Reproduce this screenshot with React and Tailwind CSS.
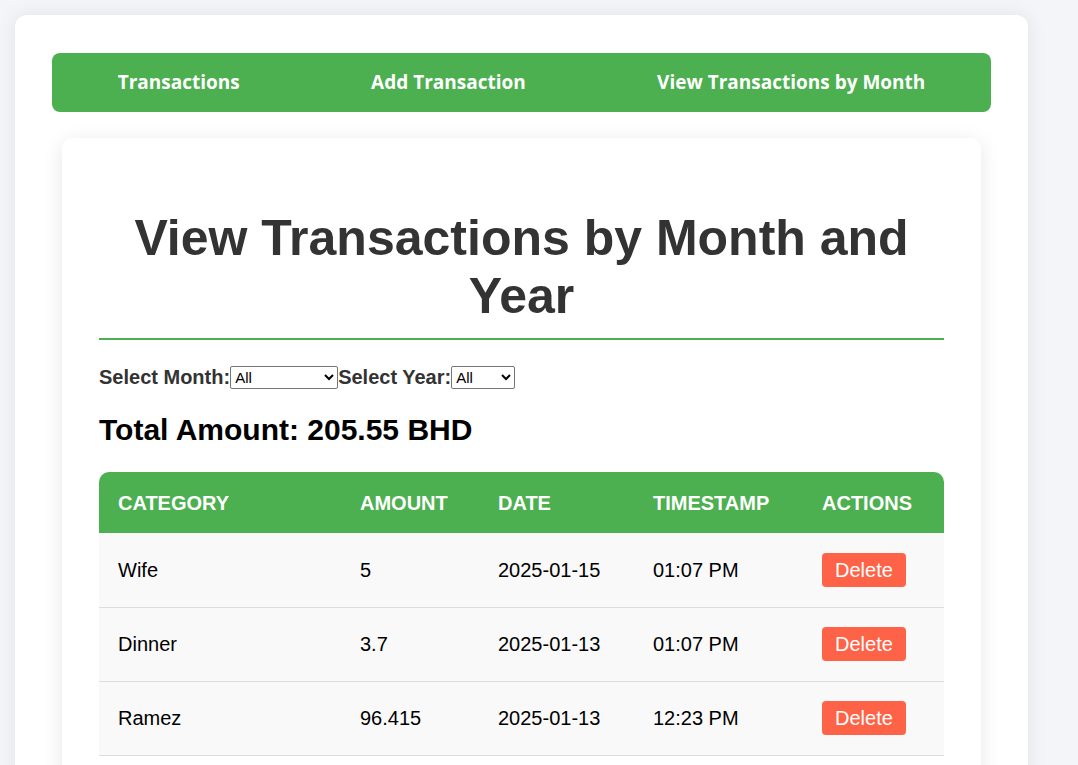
import React from "react";

const rows = [
  ["Wife", "5", "2025-01-15", "01:07 PM"],
  ["Dinner", "3.7", "2025-01-13", "01:07 PM"],
  ["Ramez", "96.415", "2025-01-13", "12:23 PM"],
];

export default function App() {
  return (
    <div className="min-h-[765px] bg-[#f4f5f9] pt-[15px] pb-10 font-['Liberation_Sans',Arial,sans-serif]">
      <div className="ml-[15px] w-[1013px] rounded-xl bg-white pt-[38px] px-[37px] pb-10 shadow-[0_0_20px_rgba(0,0,0,0.08)]">
        <nav className="flex h-[59px] items-center justify-around rounded-lg bg-[#4caf50] text-[19px] font-bold text-white font-['Open_Sans','Noto_Sans',sans-serif]">
          <span>Transactions</span>
          <span>Add Transaction</span>
          <span>View Transactions by Month</span>
        </nav>
        <div className="mx-[10px] mt-[26px] rounded-[10px] bg-white px-[37px] pt-8 pb-10 shadow-[0_4px_20px_rgba(0,0,0,0.1)]">
          <h1 className="mt-[39px] border-b-2 border-[#4caf50] pb-[13px] text-center text-[50px] font-bold leading-[58px] text-[#333]">
            View Transactions by Month and Year
          </h1>
          <div className="mt-[25px] flex h-[24px] items-center text-[20px] font-bold text-[#333]">
            <label>Select Month:</label>
            <select className="h-[23px] w-[108px] rounded-[2px] border border-[#767676] bg-white text-[15px] font-normal text-black">
              <option>All</option>
            </select>
            <label>Select Year:</label>
            <select className="h-[23px] w-[64px] rounded-[2px] border border-[#767676] bg-white text-[15px] font-normal text-black">
              <option>All</option>
            </select>
          </div>
          <h2 className="mt-[24px] text-[30px] font-bold leading-[34px] text-black">
            Total Amount: 205.55 BHD
          </h2>
          <table className="mt-[25px] w-full border-collapse text-left text-[20px]">
            <thead>
              <tr className="h-[61px] bg-[#4caf50] text-white">
                <th className="w-[242px] rounded-tl-[10px] pl-[19px] font-bold">CATEGORY</th>
                <th className="w-[138px] pl-[19px] font-bold">AMOUNT</th>
                <th className="w-[155px] pl-[19px] font-bold">DATE</th>
                <th className="w-[169px] pl-[19px] font-bold">TIMESTAMP</th>
                <th className="rounded-tr-[10px] pl-[19px] font-bold">ACTIONS</th>
              </tr>
            </thead>
            <tbody>
              {rows.map((r, i) => (
                <tr key={i} className="h-[74px] border-b border-[#ddd] bg-[#f9f9f9] text-black">
                  <td className="pl-[19px]">{r[0]}</td>
                  <td className="pl-[19px]">{r[1]}</td>
                  <td className="pl-[19px]">{r[2]}</td>
                  <td className="pl-[19px]">{r[3]}</td>
                  <td className="pl-[19px]">
                    <button className="h-[34px] rounded bg-[#ff6347] px-[13px] text-[20px] text-white">
                      Delete
                    </button>
                  </td>
                </tr>
              ))}
            </tbody>
          </table>
        </div>
      </div>
    </div>
  );
}
